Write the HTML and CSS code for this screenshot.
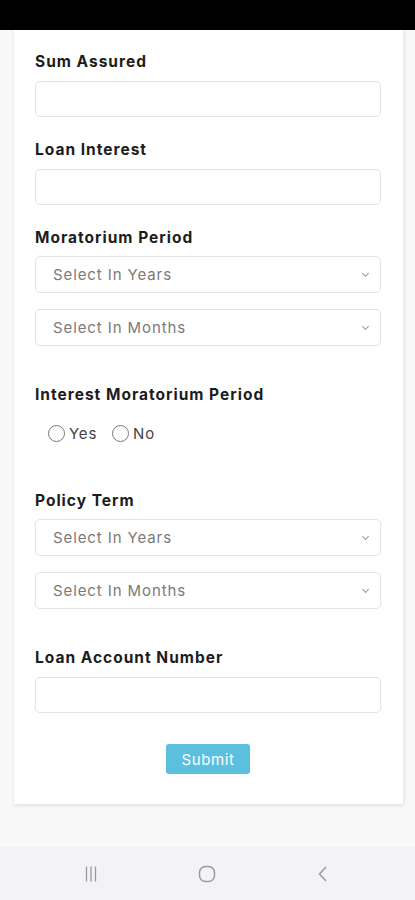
FILE: index.html
```html
<!DOCTYPE html>
<html lang="en">
<head>
  <meta charset="UTF-8">
  <title>Loan Details</title>
  <link rel="stylesheet" href="styles.css">
</head>
<body>
  <div class="status-bar"></div>

  <main class="page">
    <form class="card">
      <label class="field-label" for="sumAssured">Sum Assured</label>
      <input class="field-input" id="sumAssured" type="text">

      <label class="field-label" for="loanInterest">Loan Interest</label>
      <input class="field-input" id="loanInterest" type="text">

      <label class="field-label">Moratorium Period</label>
      <div class="select-box">Select In Years <span class="caret"></span></div>
      <div class="select-box select-second">Select In Months <span class="caret"></span></div>

      <label class="field-label label-after-select">Interest Moratorium Period</label>
      <div class="radio-row">
        <label class="radio"><span class="radio-dot"></span>Yes</label>
        <label class="radio"><span class="radio-dot"></span>No</label>
      </div>

      <label class="field-label label-after-radio">Policy Term</label>
      <div class="select-box">Select In Years <span class="caret"></span></div>
      <div class="select-box select-second">Select In Months <span class="caret"></span></div>

      <label class="field-label label-after-select" for="loanAccount">Loan Account Number</label>
      <input class="field-input" id="loanAccount" type="text">

      <div class="actions">
        <button type="button" class="submit">Submit</button>
      </div>
    </form>
  </main>

  <nav class="nav-bar">
    <svg width="20" height="20" viewBox="0 0 20 20" fill="none" stroke="#9a9a9e" stroke-width="1.3">
      <path d="M5.5 2.5v15M10 2.5v15M14.5 2.5v15"/>
    </svg>
    <svg width="20" height="20" viewBox="0 0 20 20" fill="none" stroke="#9a9a9e" stroke-width="1.5">
      <rect x="2.5" y="2.5" width="15" height="15" rx="6"/>
    </svg>
    <svg width="20" height="20" viewBox="0 0 20 20" fill="none" stroke="#9a9a9e" stroke-width="1.5">
      <path d="M13 3L6.5 10l6.5 7"/>
    </svg>
  </nav>
</body>
</html>
```

FILE: styles.css
```css
body {
  margin: 0;
  height: 900px;
  display: flex;
  flex-direction: column;
  background: #f8f8f9;
  font-family: Inter, "Open Sans", Arial, sans-serif;
  overflow: hidden;
}

.status-bar {
  height: 30px;
  background: #000;
  flex: none;
}

.page {
  flex: 1;
  padding: 0 12px 0 14px;
}

.card {
  background: #fff;
  padding: 22px 22px 30px 21px;
  box-shadow: 0 2px 4px rgba(0, 0, 0, 0.08), 2px 0 4px rgba(0, 0, 0, 0.04);
  display: flex;
  flex-direction: column;
}

.field-label {
  font-size: 15.5px;
  font-weight: 700;
  line-height: 20px;
  color: #1c1c1c;
  margin: 0 0 9px;
  letter-spacing: 1px;
}

.field-input {
  height: 36px;
  box-sizing: border-box;
  border: 1px solid #e3e3e3;
  border-radius: 5px;
  margin: 0 0 23px;
  padding: 0 12px;
  font: inherit;
}

.select-box {
  height: 37px;
  box-sizing: border-box;
  border: 1px solid #e3e3e3;
  border-radius: 5px;
  padding: 0 12px 0 17px;
  margin-top: -1px;
  display: flex;
  align-items: center;
  justify-content: space-between;
  font-size: 15px;
  letter-spacing: 0.9px;
  color: #7a7a7a;
}

.select-second {
  margin-top: 16px;
}

.caret {
  width: 4px;
  height: 4px;
  border-right: 1.2px solid #999;
  border-bottom: 1.2px solid #999;
  transform: rotate(45deg);
  margin-top: -3px;
}

.label-after-select {
  margin-top: 39px;
}

.label-after-radio {
  margin-top: 48px;
}

.radio-row {
  display: flex;
  gap: 15px;
  padding-left: 13px;
  margin-top: 9px;
  height: 20px;
  align-items: center;
}

.radio {
  display: flex;
  align-items: center;
  gap: 4px;
  font-size: 15px;
  letter-spacing: 0.8px;
  color: #444;
}

.radio-dot {
  width: 15px;
  height: 15px;
  border: 1px solid #777;
  border-radius: 50%;
}

.actions {
  display: flex;
  justify-content: center;
  margin-top: 8px;
}

.submit {
  background: #5bc0de;
  color: #fff;
  border: none;
  border-radius: 3px;
  height: 30px;
  width: 84px;
  font-family: inherit;
  font-size: 15px;
  letter-spacing: 0.6px;
  padding: 0;
}

.nav-bar {
  height: 53px;
  flex: none;
  background: #f3f3f5;
  display: flex;
  align-items: center;
  justify-content: space-between;
  padding: 0 82px 0 81px;
}
```
